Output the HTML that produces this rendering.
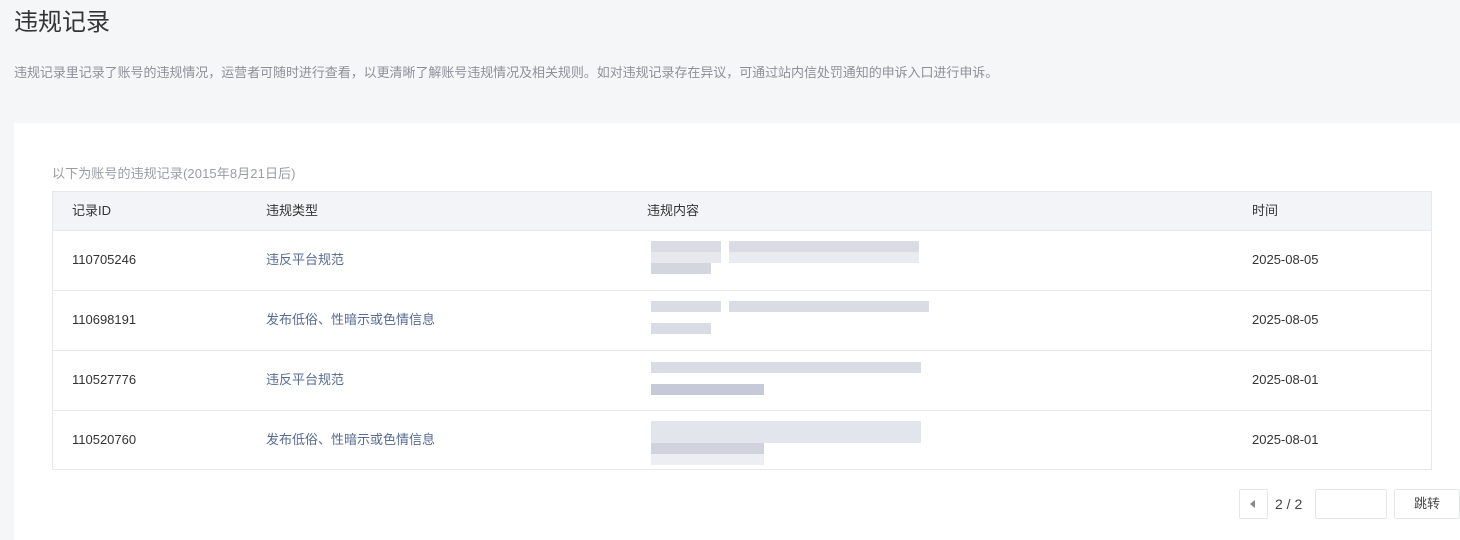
<!DOCTYPE html>
<html><head><meta charset="utf-8"><style>
*{margin:0;padding:0;box-sizing:border-box}
body{width:1460px;height:540px;background:#f5f6f8;font-family:"Liberation Sans","Noto Sans CJK SC",sans-serif;position:relative;overflow:hidden;color:#333}
.t{position:absolute;left:14px;top:2px;font-size:24px;color:#353535}
.d{position:absolute;left:14px;top:62px;font-size:13px;color:#8d9099;letter-spacing:-0.05px}
.card{position:absolute;left:14px;top:123px;width:1446px;height:417px;background:#fff}
.sub{position:absolute;left:52px;top:163px;font-size:13px;color:#9a9ca3;letter-spacing:0.1px}
.tbl{position:absolute;left:52px;top:191px;width:1380px;height:279px;border:1px solid #e6e8ec}
.hd{position:absolute;left:0;top:0;width:100%;height:39px;background:#f3f4f7;border-bottom:1px solid #e6e8ec}
.row{position:absolute;left:0;width:100%;height:60px;border-bottom:1px solid #e6e8ec}
.c{position:absolute;font-size:13px;line-height:16px}
.l{color:#576b95}
.b{position:absolute;background:#d9dce5}
.pg{position:absolute;top:489px;height:30px;border:1px solid #e4e6ea;border-radius:2px;background:#fff}
</style></head><body>
<div class="t">违规记录</div>
<div class="d">违规记录里记录了账号的违规情况，运营者可随时进行查看，以更清晰了解账号违规情况及相关规则。如对违规记录存在异议，可通过站内信处罚通知的申诉入口进行申诉。</div>
<div class="card"></div>
<div class="sub">以下为账号的违规记录(2015年8月21日后)</div>
<div class="tbl">
<div class="hd">
<div class="c" style="left:19px;top:11px">记录ID</div>
<div class="c" style="left:213px;top:11px">违规类型</div>
<div class="c" style="left:594px;top:11px">违规内容</div>
<div class="c" style="left:1199px;top:11px">时间</div>
</div>
<div class="row" style="top:39px">
<div class="c" style="left:19px;top:21px">110705246</div>
<div class="c l" style="left:213px;top:21px">违反平台规范</div>
<div class="b" style="left:598px;top:10px;width:70px;height:11px"></div>
<div class="b" style="left:676px;top:10px;width:190px;height:11px"></div>
<div class="b" style="left:676px;top:21px;width:190px;height:11px;background:#e9ebf0"></div>
<div class="b" style="left:598px;top:21px;width:70px;height:11px;background:#e6e8ee"></div>
<div class="b" style="left:598px;top:32px;width:60px;height:11px;background:#d3d6df"></div>
<div class="c" style="left:1199px;top:21px">2025-08-05</div>
</div>
<div class="row" style="top:99px">
<div class="c" style="left:19px;top:21px">110698191</div>
<div class="c l" style="left:213px;top:21px">发布低俗、性暗示或色情信息</div>
<div class="b" style="left:598px;top:10px;width:70px;height:11px"></div>
<div class="b" style="left:676px;top:10px;width:200px;height:11px"></div>
<div class="b" style="left:598px;top:32px;width:60px;height:11px"></div>
<div class="c" style="left:1199px;top:21px">2025-08-05</div>
</div>
<div class="row" style="top:159px">
<div class="c" style="left:19px;top:21px">110527776</div>
<div class="c l" style="left:213px;top:21px">违反平台规范</div>
<div class="b" style="left:598px;top:11px;width:270px;height:11px"></div>
<div class="b" style="left:598px;top:33px;width:113px;height:11px;background:#c5c9d8"></div>
<div class="c" style="left:1199px;top:21px">2025-08-01</div>
</div>
<div class="row" style="top:219px;border-bottom:none">
<div class="c" style="left:19px;top:21px">110520760</div>
<div class="c l" style="left:213px;top:21px">发布低俗、性暗示或色情信息</div>
<div class="b" style="left:598px;top:10px;width:270px;height:22px;background:#e3e5ec"></div>
<div class="b" style="left:598px;top:32px;width:113px;height:11px;background:#d0d3de"></div>
<div class="b" style="left:598px;top:43px;width:113px;height:11px;background:#eceef2"></div>
<div class="c" style="left:1199px;top:21px">2025-08-01</div>
</div>
</div>
<div class="pg" style="left:1239px;width:29px"><div style="position:absolute;left:10px;top:10px;width:0;height:0;border-top:4px solid transparent;border-bottom:4px solid transparent;border-right:5px solid #888"></div></div>
<div style="position:absolute;left:1275px;top:496px;font-size:14px;color:#444">2 / 2</div>
<div class="pg" style="left:1315px;width:72px"></div>
<div class="pg" style="left:1394px;width:66px;font-size:13px;text-align:center;line-height:28px;color:#444">跳转</div>
</body></html>
